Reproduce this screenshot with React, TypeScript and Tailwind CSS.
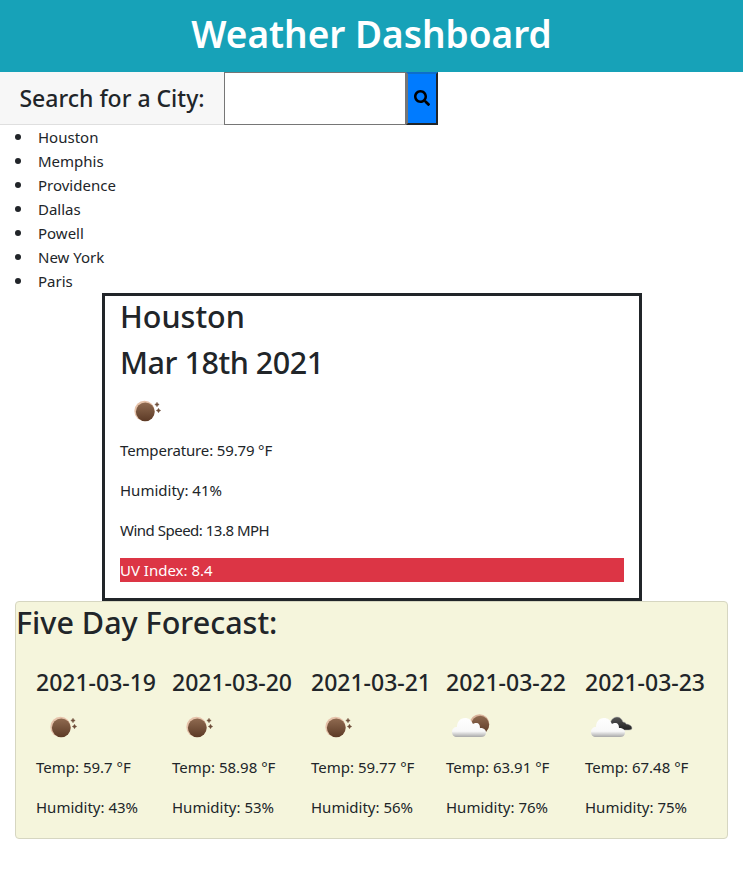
import { FaSearch } from "react-icons/fa";

const cities = ["Houston", "Memphis", "Providence", "Dallas", "Powell", "New York", "Paris"];

const forecast = [
  { date: "2021-03-19", temp: "59.7", humidity: "43", icon: "sun" },
  { date: "2021-03-20", temp: "58.98", humidity: "53", icon: "sun" },
  { date: "2021-03-21", temp: "59.77", humidity: "56", icon: "sun" },
  { date: "2021-03-22", temp: "63.91", humidity: "76", icon: "partly" },
  { date: "2021-03-23", temp: "67.48", humidity: "75", icon: "cloudy" },
];

function Defs() {
  return (
    <svg width="0" height="0" className="absolute">
      <defs>
        <linearGradient id="brown" x1="0" y1="0" x2="0" y2="1">
          <stop offset="0" stopColor="#8f6a50" />
          <stop offset="1" stopColor="#5c3a26" />
        </linearGradient>
        <linearGradient id="white" x1="0" y1="0" x2="0" y2="1">
          <stop offset="0" stopColor="#ffffff" />
          <stop offset="0.7" stopColor="#f8f8f8" />
          <stop offset="1" stopColor="#a8a8a8" />
        </linearGradient>
        <linearGradient id="dark" x1="0" y1="0" x2="0" y2="1">
          <stop offset="0" stopColor="#555555" />
          <stop offset="1" stopColor="#222222" />
        </linearGradient>
      </defs>
    </svg>
  );
}

function Star({ x, y }: { x: number; y: number }) {
  return (
    <path
      d={`M${x} ${y - 2.2}l.8 1.400 1.400.8-1.400.8-.8 1.400-.8-1.400-1.400-.8 1.400-.8z`}
      fill="#6e4e3a"
      stroke="#6e4e3a"
      strokeWidth="0.5"
    />
  );
}

function SunIcon() {
  return (
    <svg viewBox="0 0 50 50" className="block h-[50px] w-[50px]">
      <circle cx="24.5" cy="25" r="10.2" fill="#e6c3ab" />
      <circle cx="25.3" cy="25.8" r="9.4" fill="url(#brown)" />
      <Star x={37} y={18.5} />
      <Star x={38.5} y={24.5} />
    </svg>
  );
}

function Cloud() {
  return (
    <path
      d="M11 35c-3 0-5-2-5-5 0-3 2-5 5-5 0-5 3-9 8-9 4 0 6 2 8 6 1-1 2-1 3-1 3 0 4 2 4 5 4 0 6 2 6 4.500 0 3-2 4.500-5 4.500z"
      fill="url(#white)"
    />
  );
}

function PartlyIcon() {
  return (
    <svg viewBox="0 0 50 50" className="block h-[50px] w-[50px]">
      <circle cx="33.500" cy="22" r="9.800" fill="#d9b49c" />
      <circle cx="34.200" cy="22.800" r="9" fill="url(#brown)" />
      <Cloud />
    </svg>
  );
}

function CloudyIcon() {
  return (
    <svg viewBox="0 0 50 50" className="block h-[50px] w-[50px]">
      <path
        d="M30 28c-3 0-5-2-5-5 0-4 3-8 7-8 3 0 5 2 6 5 2 0 3 1 3 2 3 0 6 2 6 4 0 1-1 2-3 2z"
        fill="url(#dark)"
        stroke="#b0b0b0"
        strokeWidth="0.5"
      />
      <Cloud />
    </svg>
  );
}

function WeatherIcon({ name }: { name: string }) {
  if (name === "partly") return <PartlyIcon />;
  if (name === "cloudy") return <CloudyIcon />;
  return <SunIcon />;
}

export default function App() {
  return (
    <div className="min-h-[872px] bg-white font-['Noto_Sans','Open_Sans',sans-serif] text-[15px] leading-6 text-[#212529]">
      <Defs />
      <header className="flex h-[72px] items-center justify-center bg-[#17a2b8] pb-1">
        <h1 className="text-[37px] font-semibold text-white">Weather Dashboard</h1>
      </header>

      {/* Search */}
      <div className="flex h-[53px]">
        <label className="flex w-[224px] items-center justify-center border-b border-[#dfdfdf] bg-[#f7f7f7] text-[23px] font-medium">
          Search for a City:
        </label>
        <input className="h-[53px] w-[182px] border border-[#767676] bg-white" />
        <button className="flex h-[53px] w-[32px] items-center justify-center border-2 border-t-[#0d6ecb] border-l-[#767676] border-r-[#212529] border-b-[#212529] bg-[#007bff] pb-px">
          <FaSearch className="h-4 w-4 text-black" />
        </button>
      </div>

      <ul>
        {cities.map((city) => (
          <li key={city} className="flex items-center gap-[17px] pl-[15px]">
            <span className="h-[6px] w-[6px] rounded-full bg-[#212529]" />
            {city}
          </li>
        ))}
      </ul>

      {/* Current weather */}
      <section className="mx-[102px] h-[308px] w-[540px] border-[3px] border-[#212529] px-[15px] pt-px">
        <h2 className="mb-2 text-[30.5px] font-medium leading-[38px]">Houston</h2>
        <h2 className="mb-[5px] text-[30.5px] font-medium leading-[38px] tracking-[-0.45px]">Mar 18th 2021</h2>
        <SunIcon />
        <p className="mb-4 mt-[2px] tracking-[-0.15px]">Temperature: 59.79 °F</p>
        <p className="mb-4">Humidity: 41%</p>
        <p className="mb-4 tracking-[-0.5px]">Wind Speed: 13.8 MPH</p>
        <p className="bg-[#dc3545] text-white">UV Index: 8.4</p>
      </section>

      {/* Forecast */}
      <section className="mx-[15px] h-[238px] w-[713px] rounded border border-[#d6d6c1] bg-[#f5f5dc]">
        <h2 className="mb-[27px] pt-px text-[30.5px] font-medium leading-[38px]">Five Day Forecast:</h2>
        <div className="grid grid-cols-[136px_139px_135px_139px_1fr] pl-5">
          {forecast.map((day) => (
            <div key={day.date}>
              <h4 className="mb-[5px] whitespace-nowrap text-[23px] font-medium leading-[29px]">{day.date}</h4>
              <WeatherIcon name={day.icon} />
              <p className="mb-4 mt-[3px]">Temp: {day.temp} °F</p>
              <p>Humidity: {day.humidity}%</p>
            </div>
          ))}
        </div>
      </section>
    </div>
  );
}
